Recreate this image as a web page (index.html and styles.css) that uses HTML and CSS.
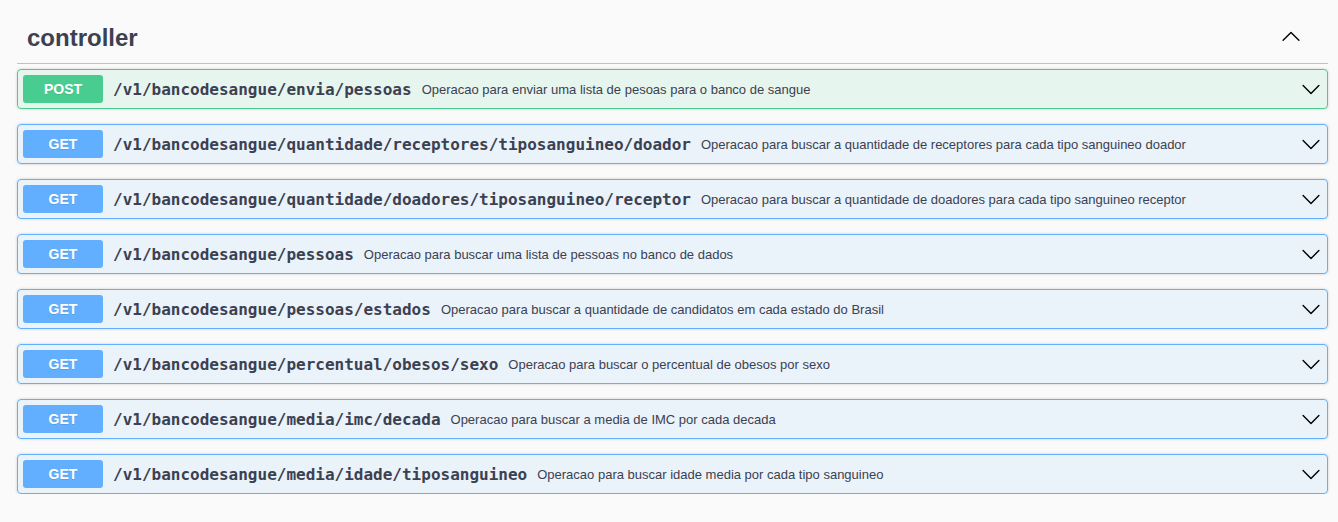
FILE: index.html
```html
<!DOCTYPE html>
<html lang="pt">
<head>
<meta charset="utf-8">
<title>controller</title>
<link rel="stylesheet" href="styles.css">
</head>
<body>
<div class="wrapper">
  <div class="tag-section">
    <h3 class="tag">
      <span class="tag-name">controller</span>
      <button class="expand" aria-label="collapse">
        <svg width="20" height="20" viewBox="0 0 20 20"><path d="M2.1 14.3 L10 6.5 L17.9 14.3" fill="none" stroke="#000" stroke-width="1.4" stroke-linecap="round" stroke-linejoin="round"/></svg>
      </button>
    </h3>
    <div class="ops">
      <div class="op post">
        <span class="method">POST</span>
        <span class="path">/v1/bancodesangue/envia/pessoas</span>
        <span class="desc">Operacao para enviar uma lista de pesoas para o banco de sangue</span>
        <svg class="arrow" width="20" height="20" viewBox="0 0 20 20"><path d="M2.1 6.6 L10 14.4 L17.9 6.6" fill="none" stroke="#000" stroke-width="1.4" stroke-linecap="round" stroke-linejoin="round"/></svg>
      </div>
      <div class="op get">
        <span class="method">GET</span>
        <span class="path">/v1/bancodesangue/quantidade/receptores/tiposanguineo/doador</span>
        <span class="desc">Operacao para buscar a quantidade de receptores para cada tipo sanguineo doador</span>
        <svg class="arrow" width="20" height="20" viewBox="0 0 20 20"><path d="M2.1 6.6 L10 14.4 L17.9 6.6" fill="none" stroke="#000" stroke-width="1.4" stroke-linecap="round" stroke-linejoin="round"/></svg>
      </div>
      <div class="op get">
        <span class="method">GET</span>
        <span class="path">/v1/bancodesangue/quantidade/doadores/tiposanguineo/receptor</span>
        <span class="desc">Operacao para buscar a quantidade de doadores para cada tipo sanguineo receptor</span>
        <svg class="arrow" width="20" height="20" viewBox="0 0 20 20"><path d="M2.1 6.6 L10 14.4 L17.9 6.6" fill="none" stroke="#000" stroke-width="1.4" stroke-linecap="round" stroke-linejoin="round"/></svg>
      </div>
      <div class="op get">
        <span class="method">GET</span>
        <span class="path">/v1/bancodesangue/pessoas</span>
        <span class="desc">Operacao para buscar uma lista de pessoas no banco de dados</span>
        <svg class="arrow" width="20" height="20" viewBox="0 0 20 20"><path d="M2.1 6.6 L10 14.4 L17.9 6.6" fill="none" stroke="#000" stroke-width="1.4" stroke-linecap="round" stroke-linejoin="round"/></svg>
      </div>
      <div class="op get">
        <span class="method">GET</span>
        <span class="path">/v1/bancodesangue/pessoas/estados</span>
        <span class="desc">Operacao para buscar a quantidade de candidatos em cada estado do Brasil</span>
        <svg class="arrow" width="20" height="20" viewBox="0 0 20 20"><path d="M2.1 6.6 L10 14.4 L17.9 6.6" fill="none" stroke="#000" stroke-width="1.4" stroke-linecap="round" stroke-linejoin="round"/></svg>
      </div>
      <div class="op get">
        <span class="method">GET</span>
        <span class="path">/v1/bancodesangue/percentual/obesos/sexo</span>
        <span class="desc">Operacao para buscar o percentual de obesos por sexo</span>
        <svg class="arrow" width="20" height="20" viewBox="0 0 20 20"><path d="M2.1 6.6 L10 14.4 L17.9 6.6" fill="none" stroke="#000" stroke-width="1.4" stroke-linecap="round" stroke-linejoin="round"/></svg>
      </div>
      <div class="op get">
        <span class="method">GET</span>
        <span class="path">/v1/bancodesangue/media/imc/decada</span>
        <span class="desc">Operacao para buscar a media de IMC por cada decada</span>
        <svg class="arrow" width="20" height="20" viewBox="0 0 20 20"><path d="M2.1 6.6 L10 14.4 L17.9 6.6" fill="none" stroke="#000" stroke-width="1.4" stroke-linecap="round" stroke-linejoin="round"/></svg>
      </div>
      <div class="op get">
        <span class="method">GET</span>
        <span class="path">/v1/bancodesangue/media/idade/tiposanguineo</span>
        <span class="desc">Operacao para buscar idade media por cada tipo sanguineo</span>
        <svg class="arrow" width="20" height="20" viewBox="0 0 20 20"><path d="M2.1 6.6 L10 14.4 L17.9 6.6" fill="none" stroke="#000" stroke-width="1.4" stroke-linecap="round" stroke-linejoin="round"/></svg>
      </div>
    </div>
  </div>
</div>
</body>
</html>
```
FILE: styles.css
```css
html, body {
  margin: 0;
  padding: 0;
  background: #fafafa;
  color: #3b4151;
  font-family: "Liberation Sans", Arial, sans-serif;
}

.wrapper {
  padding: 0 10px 0 17px;
}

.tag {
  display: flex;
  align-items: center;
  margin: 0 0 5px;
  padding: 24px 20px 11px 10px;
  height: 28px;
  border-bottom: 1px solid rgba(59, 65, 81, 0.3);
  font-size: 24px;
  line-height: 28px;
  font-weight: 700;
  color: #3b4151;
}

.tag-name {
  flex: 1;
}

.expand {
  display: flex;
  border: none;
  background: none;
  padding: 0;
  margin: 0 7px 5px 0;
  width: 20px;
  height: 20px;
}

.ops {
  display: flex;
  flex-direction: column;
  gap: 15px;
}

.op {
  display: flex;
  align-items: center;
  padding: 5px;
  border: 1px solid;
  border-radius: 4px;
  box-shadow: 0 0 3px rgba(0, 0, 0, 0.19);
}

.op.post {
  border-color: #49cc90;
  background: rgba(73, 204, 144, 0.1);
}

.op.get {
  border-color: #61affe;
  background: rgba(97, 175, 254, 0.1);
}

.method {
  min-width: 80px;
  padding: 6px 0;
  border-radius: 3px;
  text-align: center;
  color: #fff;
  font-size: 14px;
  line-height: 16px;
  font-weight: 700;
  text-shadow: 0 1px 0 rgba(0, 0, 0, 0.1);
}

.post .method { background: #49cc90; }
.get .method { background: #61affe; }

.path {
  padding: 0 10px;
  font-family: "DejaVu Sans Mono", monospace;
  font-size: 16px;
  font-weight: 700;
  color: #3b4151;
}

.desc {
  flex: 1;
  font-size: 13px;
  color: #3b4151;
}

.arrow {
  flex: none;
  margin-right: 1px;
}
```
